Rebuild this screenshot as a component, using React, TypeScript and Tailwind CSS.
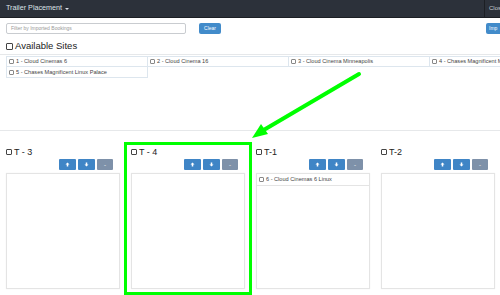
import React from "react";

const Box = ({ s = 7 }: { s?: number }) => (
  <span
    className={
      s === 7
        ? "inline-block w-[7px] h-[7px] border border-[#444] bg-white rounded-[1px]"
        : "inline-block w-[6px] h-[6px] border border-[#444] bg-white rounded-[1px]"
    }
  />
);

const SmallBox = () => (
  <span className="inline-block w-[5px] h-[5px] border border-[#888] bg-white mr-[2px] rounded-[1px]" />
);

const Up = () => (
  <svg width="5" height="5" viewBox="0 0 10 10"><path d="M5 1 L9 5 H6.5 V9 H3.5 V5 H1 Z" fill="white" /></svg>
);
const Down = () => (
  <svg width="5" height="5" viewBox="0 0 10 10"><path d="M5 9 L9 5 H6.5 V1 H3.5 V5 H1 Z" fill="white" /></svg>
);

const sites = [
  "1 - Cloud Cinemas 6",
  "2 - Cloud Cinema 16",
  "3 - Cloud Cinema Minneapolis",
  "4 - Chases Magnificent Minneapolis Palace",
  "5 - Chases Magnificent Linux Palace",
];

const trailers: { name: string; items: string[] }[] = [
  { name: "T - 3", items: [] },
  { name: "T - 4", items: [] },
  { name: "T-1", items: ["6 - Cloud Cinemas 6 Linux"] },
  { name: "T-2", items: [] },
];

export default function App() {
  return (
    <div className="relative w-[500px] h-[295px] overflow-hidden bg-white" style={{ fontFamily: '"Liberation Sans", Arial, sans-serif' }}>
      {/* navbar */}
      <div className="h-[18px] bg-[#2c313a] border-b border-[#1c1f24] flex items-stretch justify-between">
        <div className="pl-[6px] flex items-center text-[7.2px] text-[#dde2e8]">
          Trailer Placement
          <span className="ml-[3px] inline-block w-0 h-0 border-l-[2px] border-r-[2px] border-t-[2px] border-l-transparent border-r-transparent border-t-[#dde2e8]" />
        </div>
        <div className="border-l border-[#1c1f24] pl-[4px] flex items-center text-[6px] text-[#c8ccd2] w-[16px] overflow-hidden whitespace-nowrap">
          Close
        </div>
      </div>

      {/* filter row */}
      <div className="flex items-center mt-[5px] px-[6px] justify-between">
        <div className="flex items-center">
          <div className="w-[180px] h-[11px] border border-[#c9ccd0] rounded-[2px] flex items-center pl-[4px] text-[5px] text-[#999]">
            Filter by Imported Bookings
          </div>
          <div className="ml-[13px] w-[22px] h-[11px] bg-[#428bca] rounded-[2px] flex items-center justify-center text-[5px] text-white">
            Clear
          </div>
        </div>
        <div className="w-[14px] h-[11px] bg-[#428bca] rounded-l-[2px] -mr-[6px] text-[5px] text-white flex items-center pl-[3px] overflow-hidden">
          Imp
        </div>
      </div>

      {/* available sites heading */}
      <div className="flex items-center gap-[2px] px-[6px] mt-[6px] h-[12px]">
        <Box />
        <span className="text-[9.5px] text-[#222] leading-none">Available Sites</span>
      </div>

      {/* sites panel */}
      <div className="mt-[2px] h-[77px] border-t border-b border-[#e6e8ea] pl-[6px] pt-[1px] flex flex-col">
        <div className="flex">
          {sites.slice(0, 4).map((s) => (
            <div key={s} className="w-[142px] shrink-0 h-[11px] border border-[#dde6ee] -ml-px first:ml-0 flex items-center pl-[2px] text-[5.6px] text-[#444] whitespace-nowrap overflow-hidden">
              <SmallBox />
              {s}
            </div>
          ))}
        </div>
        <div className="flex">
          <div className="w-[142px] h-[11px] border border-[#dde6ee] border-t-0 flex items-center pl-[2px] text-[5.6px] text-[#444] whitespace-nowrap">
            <SmallBox />
            {sites[4]}
          </div>
        </div>
      </div>

      {/* trailers */}
      <div className="flex mt-[16px]">
        {trailers.map((t) => (
          <div key={t.name} className="w-[125px] shrink-0 pl-[6px] pr-[5px]">
            <div className="flex items-center gap-[2px] h-[10px]">
              <Box s={6} />
              <span className="text-[9px] text-[#222] leading-none">{t.name}</span>
            </div>
            <div className="flex justify-end gap-[2px] mt-[2px] pr-[7px]">
              <div className="w-[17px] h-[11px] bg-[#3f85c6] rounded-[1px] flex items-center justify-center"><Up /></div>
              <div className="w-[17px] h-[11px] bg-[#3f85c6] rounded-[1px] flex items-center justify-center"><Down /></div>
              <div className="w-[16px] h-[11px] bg-[#7e91a9] rounded-[1px] flex items-center justify-center text-[6px] text-white leading-none">-</div>
            </div>
            <div className="mt-[3px] w-[114px] h-[116px] border border-[#e4e4e4] shadow-[0_0_1px_rgba(0,0,0,0.08)]">
              {t.items.map((it) => (
                <div key={it} className="h-[12px] border-b border-[#e4e4e4] flex items-center pl-[2px] text-[5.6px] text-[#444] whitespace-nowrap">
                  <SmallBox />
                  {it}
                </div>
              ))}
            </div>
          </div>
        ))}
      </div>

      {/* green highlight overlay */}
      <div className="absolute left-[124px] top-[142px] w-[128px] h-[153px] border-[3px] border-[#00ff00]" />

      {/* green arrow */}
      <svg className="absolute left-0 top-0" width="500" height="295">
        <line x1="359" y1="74" x2="262" y2="131" stroke="#00ff00" strokeWidth="4" strokeLinecap="round" />
        <polygon points="252,138 261,124 268,134" fill="#00ff00" />
      </svg>
    </div>
  );
}
